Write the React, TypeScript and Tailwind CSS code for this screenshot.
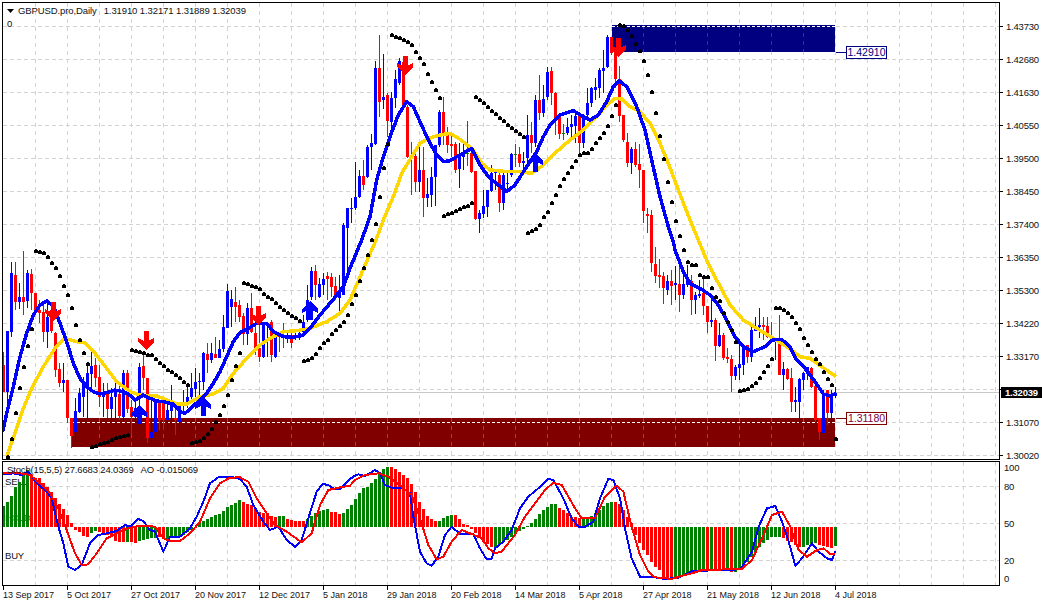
import React from 'react';

type Pt = [number, number];
// bar: colour (0 blue, 1 red, 2 green), high, low, body top, body bottom
type Bar = [number, number, number, number, number];

const BLUE = '#0000ff';
const RED = '#ff0000';
const GREEN = '#008000';
const GOLD = '#ffd700';

const barX = (k: number) => 3 + 4 * k;
const crop = (x0: number, y0: number, list: Pt[]): Pt[] => list.map(([X, Y]) => [x0 + X / 3, y0 + Y / 3]);
const poly = (list: Pt[]) => list.map(p => p.join(',')).join(' ');

const scale = (base: number, bars: Bar[]): Bar[] =>
  bars.map(([c, h, l, t, b]) => [c, base + h / 3, base + l / 3, base + t / 3, base + b / 3]);

const BARS: Bar[] = [
  ...scale(200, [
    [1,455,575,495,575],[0,392,620,392,575],[0,185,410,218,395],[1,185,330,225,305],[0,248,328,292,305],[1,152,345,292,305],
    [0,210,325,220,302],[1,208,330,222,280],[1,280,345,280,332],[1,300,370,330,340],[1,310,425,335,395],[0,300,445,352,395],
    [1,305,400,330,392],[1,395,530,398,510],[1,490,560,507,548],[0,490,575,540,548],[1,540,670,540,655],[1,655,745,655,708],
    [0,595,725,633,695],[0,565,640,578,635],[0,530,650,548,590],[0,490,655,520,565],[0,450,570,498,522],[1,475,560,495,535],
    [1,495,620,532,590],[0,550,650,578,590],[1,550,655,575,628],[0,565,660,590,628],[0,550,660,575,590],[1,545,660,582,648],
    [0,510,665,518,650],[1,510,640,520,628],[1,600,705,622,650],[0,595,670,625,650],[0,490,670,500,590],[1,462,570,497,535],
    [1,533,730,533,715],[0,590,730,695,715],[0,600,710,605,695],[1,600,690,605,660],[1,605,690,610,660],[0,600,690,630,660],
    [0,555,690,615,632],[1,625,705,655,660],[0,605,695,615,665],[0,570,640,610,615],[0,550,625,590,610],[0,520,610,565,590],
    [0,505,595,545,568],[0,520,600,543,547],[0,455,570,460,545],[1,430,520,462,480],[0,430,490,460,480],[1,410,475,462,475],
    [0,420,475,448,475],[0,345,455,380,448],[0,252,385,272,385],[0,270,380,298,320],[1,260,365,305,320],[1,300,365,315,352],
    [1,340,435,348,402],[0,310,435,325,402],[1,280,400,325,395],[1,370,465,398,450],[1,325,485,445,470],[0,365,475,370,470],
    [0,365,470,370,375],[1,360,485,365,465],[0,395,475,400,470],[1,395,455,405,410],[1,370,445,405,415],[0,395,430,405,412],
    [1,395,445,405,430],[0,395,420,405,410],[0,385,420,400,415],[0,345,400,365,395],[0,255,365,300,360],[0,200,300,212,292],
    [1,195,300,212,255],[0,235,295,252,290],[0,220,285,238,255],[1,215,300,228,236],[1,218,290,232,260],[1,230,300,258,290],
    [0,225,340,280,295],[0,70,260,75,285],[0,25,228,25,85],
  ]),
  ...scale(20, [
    [0,535,610,564,568],[0,425,570,530,565],[0,450,535,468,532],[1,420,510,468,495],[0,375,475,380,472],[0,342,450,370,382],
    [0,122,375,145,372],[1,45,292,145,245],[0,102,268,232,240],[1,220,350,225,302],[0,215,345,235,305],[0,150,265,178,235],
    [0,115,195,122,190],[1,110,262,125,258],[1,255,415,262,412],[1,365,525,408,412],[1,385,515,408,485],[0,365,515,450,485],
    [1,380,590,450,535],[0,475,562,522,535],[0,440,560,470,525],[0,375,558,375,472],[0,270,380,275,375],[1,232,375,275,345],
    [1,320,400,345,375],[1,345,410,372,378],[1,365,458,372,450],[0,370,505,408,448],[0,365,450,400,410],[2,303,437,399,402],
    [1,385,460,398,455],[1,452,600,452,597],[0,570,640,580,597],[0,510,595,558,582],[0,510,590,510,560],[0,435,515,460,512],
    [0,450,510,452,460],[1,455,575,465,548],[0,455,570,465,548],[0,450,510,488,492],[0,400,470,402,465],[2,372,440,401,404],
    [1,380,440,402,428],[0,395,445,422,428],[0,285,425,345,415],[1,305,400,345,370],[0,225,380,240,370],[1,165,300,240,278],
    [0,195,290,237,278],[0,140,240,155,232],[1,140,255,153,218],[1,215,345,218,300],[1,285,358,290,342],[2,312,360,339,342],
    [0,295,345,322,340],[0,285,350,312,322],[0,280,370,288,318],[1,278,402,285,368],[0,282,385,285,370],[0,205,295,250,285],
    [0,200,260,205,250],[0,175,240,200,210],[0,145,235,150,205],[0,90,220,145,152],[0,45,145,50,142],[1,50,105,50,100],
    [1,85,205,95,178],[1,138,305,178,288],[1,285,365,285,360],[1,338,440,365,428],[0,380,462,388,428],[1,365,440,388,435],
    [1,372,505,432,450],[1,450,608,450,572],[1,565,640,583,587],
  ]),
  ...scale(220, [
    [1,-30,155,-15,130],[1,80,188,132,167],[1,117,205,165,172],[1,155,252,168,205],[0,165,225,182,210],[1,150,255,182,198],
    [0,138,240,190,194],[1,125,275,192,225],[0,150,237,192,225],[0,135,200,180,195],
  ]),
  ...scale(240, [
    [1,105,225,123,180],[0,155,222,165,180],[0,120,175,163,167],[1,110,225,160,198],[1,198,280,198,245],[0,180,262,240,245],
    [1,235,362,240,318],[0,250,322,285,318],[1,280,360,285,355],[1,325,368,352,358],[1,345,455,358,408],[0,375,420,382,408],
    [0,310,420,372,385],[0,315,405,315,375],[1,315,370,315,352],[0,250,365,270,352],[0,230,272,258,272],[0,205,295,255,260],
    [1,230,300,255,260],[1,230,295,258,292],[1,245,310,292,305],[0,295,360,295,305],[1,225,405,295,405],[0,365,450,388,405],
    [1,385,420,388,418],[1,385,515,415,485],[0,440,515,481,485],[0,415,550,418,485],[0,395,450,400,420],[0,380,420,382,402],
    [1,380,445,385,440],[1,420,545,438,540],[1,535,600,535,575],[0,450,580,468,578],[1,450,555,450,518],[0,450,545,465,518],
    [0,440,475,458,468],
  ]),
];

const DOTS: Pt[] = [
  ...[[1,770],[2,717],[3,640],[4,565],[5,502],[6,438],[7,388],[8,153],[9,156],[10,160],[11,172],[12,190],[13,205],[14,228],[15,259],[16,285],[17,324],[18,376],[19,421],[20,458],[21,491],[22,741],[23,737],[24,733],[25,730],[26,725],[27,720],[28,713],[29,711],[30,708],[31,706],[32,450],[33,453],[34,456],[35,460],[36,465],[37,465],[38,478],[39,490],[40,497],[41,510],[42,517],[43,525],[44,533],[45,545],[46,556],[47,730],[48,727],[49,722],[50,715],[51,703],[52,687],[53,666],[54,645],[55,618],[56,585],[57,540],[58,498],[59,458],[60,248],[61,252],[62,257],[63,262],[64,268],[65,282],[66,291],[67,297],[68,310],[69,320],[70,330],[71,338],[72,347],[73,355],[74,362],[75,483],[76,480],[77,475],[78,463],[79,445],[80,430],[81,420],[82,403],[83,390],[84,378],[85,365],[86,345]].map(([k, Y]): Pt => [barX(k), 200 + Y / 3]),
  ...[[87,304],[88,295],[89,281],[90,268],[91,255],[92,240],[93,224],[94,197],[95,168],[96,144]].map(([k, y]): Pt => [barX(k), y]),
  ...[44,50,54,60,66,75,96,114,132,162,186,210,234].map((Y, i): Pt => [barX(97 + i), 20 + Y / 3]),
  ...[588,583,578,572,566,561,558,550].map((Y, i): Pt => [barX(110 + i), 20 + Y / 3]),
  ...[231,239,249,261,273,283,294,303,315,325,333,341,351].map((Y, i): Pt => [barX(118 + i), 20 + Y / 3]),
  ...[639,633,627,615,592,577,548,525,498,477,459,441,423,405,400,400,386,369,354,339,318,288,255].map((Y, i): Pt => [barX(131 + i), 20 + Y / 3]),
  ...[15,18,30,48,72,93,123,165,216,279,348,417,486,546,603].map((Y, i): Pt => [barX(154 + i), 20 + Y / 3]),
  ...[48,90,127].map((Y, i): Pt => [barX(169 + i), 220 + Y / 3]),
  ...[75,75,105,110,110,143,170,182,220,245,270,305,452,450,447,437,430,413,395,378,358,204,204,210,220,230,248,266,294,316,336,357,372,395,416,434,597].map((Y, i): Pt => [barX(172 + i), 240 + Y / 3]),
];

const MA_BLUE: Pt[] = [
  ...crop(0, 200, [[8,695],[20,640],[40,560],[60,470],[80,400],[100,345],[120,315],[140,303],[160,318],[180,370],[200,425],[220,490],[240,535],[260,560],[280,575],[300,582],[320,578],[345,570],[370,575],[385,582],[405,600],[430,585],[450,595],[470,603],[490,605],[520,612],[540,635],[555,640],[575,622],[600,600],[620,580],[640,550],[660,515],[680,470],[700,425],[720,398],[745,385],[770,370],[800,370],[820,395],[850,410],[880,412],[910,405],[930,385],[960,345],[1000,298],[1030,260],[1050,205]]),
  ...crop(340, 20, [[65,660],[90,590],[110,480],[130,410],[150,350],[175,285],[200,245],[220,260],[240,305],[265,360],[290,405],[310,425],[330,422],[360,405],[395,385],[420,435],[445,470],[475,495],[500,515],[525,495],[560,440],[590,395],[610,350],[630,315],[660,285],[700,272],[730,290],[750,300],[775,285],[800,245],[820,200],[838,183],[860,200],[890,260],[915,330],[935,420],[960,530],[985,620],[1000,665]]),
  ...crop(350, 220, [[975,90],[1000,155],[1015,180]]),
  ...crop(690, 240, [[0,130],[35,148],[60,165],[85,195],[110,240],[135,290],[160,320],[190,335],[225,320],[250,298],[275,298],[300,320],[320,360],[345,385],[375,425],[400,462],[420,468],[438,460]]),
];

const MA_GOLD: Pt[] = [
  ...crop(0, 200, [[20,770],[45,700],[70,625],[95,565],[130,500],[165,445],[195,415],[230,425],[255,428],[285,460],[320,505],[350,545],[390,575],[420,585],[470,588],[500,600],[530,612],[560,612],[600,590],[640,582],[670,565],[700,520],[740,475],[780,435],[810,415],[850,395],[890,392],[930,385],[980,365],[1020,340],[1050,300]]),
  ...crop(340, 20, [[108,660],[130,600],[160,530],[185,460],[215,410],[240,370],[265,355],[300,345],[330,340],[360,358],[395,385],[425,430],[450,450],[500,455],[540,455],[575,460],[610,435],[650,395],[690,360],[730,330],[770,290],[800,255],[825,235],[845,237],[870,260],[900,275],[930,310],[960,370],[985,430],[1015,510],[1050,600]]),
  ...crop(690, 240, [[25,0],[50,60],[80,120],[120,195],[160,240],[200,265],[250,295],[290,320],[330,350],[360,355],[395,380],[438,410]]),
];

const STOCH_BLUE: Pt[] = [
  ...crop(0, 455, [[10,58],[40,55],[65,60],[85,50],[110,85],[140,110],[155,130],[175,215],[190,265],[205,335],[225,345],[245,330],[270,265],[295,240],[320,235],[350,228],[375,210],[390,215],[415,192],[430,198],[450,225],[465,230],[490,290],[510,245],[540,245],[570,220],[590,185],[610,140],[630,85],[655,67],[690,65],[720,72],[740,95],[760,150],[790,200],[810,225],[835,215],[860,255],[885,275],[905,255],[925,190],[950,110],[968,87],[985,90],[1005,103],[1020,103],[1050,72]]),
  ...crop(345, 455, [[30,62],[40,58],[60,63],[90,45],[105,55],[120,90],[145,100],[175,100],[195,115],[205,185],[225,290],[245,325],[260,332],[280,305],[300,240],[320,215],[345,237],[385,237],[405,280],[425,313],[440,312],[450,280],[475,260],[500,225],[525,160],[550,125],[580,100],[610,72],[625,75],[655,130],[680,190],[700,215],[720,215],[745,200],[765,130],[790,72],[805,75],[825,130],[840,220],[860,310],[885,365],[920,365],[960,372],[1000,368]]),
  ...crop(692, 455, [[0,348],[100,345],[145,343],[180,290],[200,215],[225,160],[250,153],[270,200],[290,260],[310,332],[330,310],[360,265],[380,290],[405,310],[420,315],[430,288]]),
];

const STOCH_RED: Pt[] = [
  ...crop(0, 455, [[10,55],[40,52],[90,60],[120,85],[150,115],[175,160],[200,225],[225,295],[245,330],[265,328],[290,295],[320,250],[350,235],[385,220],[420,212],[465,215],[490,250],[510,258],[540,258],[570,235],[600,200],[630,130],[660,85],[690,68],[720,67],[745,80],[770,130],[800,175],[825,210],[860,230],[905,262],[935,235],[960,150],[985,105],[1020,97],[1050,92]]),
  ...crop(345, 455, [[30,75],[60,60],[100,55],[130,65],[170,95],[200,120],[225,190],[250,270],[275,313],[295,305],[320,260],[350,225],[375,235],[410,250],[430,280],[450,295],[470,290],[510,240],[540,185],[570,145],[600,105],[625,83],[650,90],[690,160],[710,190],[750,190],[780,125],[815,92],[835,110],[860,215],[885,300],[910,350],[930,367],[980,372],[1020,360]]),
  ...crop(692, 455, [[0,355],[30,345],[150,342],[180,315],[210,250],[240,180],[270,170],[295,215],[320,285],[345,305],[375,285],[395,280],[415,298],[430,298]]),
];

// AO histogram: colour, edge in crop px (crop y 215 is the zero line)
const AO: [number, number][] = [
  [2,153],[2,140],[2,122],[2,95],[2,80],[2,60],[2,45],[1,60],[1,68],[1,70],[1,85],[1,95],[1,110],[1,128],[1,148],[1,162],[1,180],[1,205],
  [1,225],[1,232],[1,243],[1,245],[2,233],[2,228],[1,230],[1,235],[1,240],[1,245],[1,258],[1,260],[1,262],[2,260],[1,262],[1,263],[2,258],[2,255],[2,252],[2,248],[2,248],[1,245],[1,250],[2,258],[2,250],[2,245],[2,242],[2,240],[2,232],[2,225],[1,218],
  [2,203],[2,197],[2,192],[2,187],[2,180],[2,178],[2,168],[2,157],[2,150],[2,145],[2,135],[1,140],[1,148],[1,150],[1,160],[1,172],[1,175],[1,175],[1,182],[1,185],[2,182],[2,183],[1,192],[1,196],[1,197],[1,197],[1,197],[2,192],[2,182],[2,175],[2,167],[2,165],[2,162],[1,170],[1,172],[1,178],[2,175],[2,162],
  [2,150],[2,132],[2,115],[2,100],[2,95],[2,85],[2,72],[2,55],[2,43],[2,37],[1,37],[1,42],[1,50],[1,60],[1,68],[1,87],[1,110],[1,140],[1,162],[1,182],[1,192],[1,197],[2,197],[2,188],[2,183],[2,180],[1,180],[1,192],[1,207],[1,210],
  [1,222],[1,235],[1,245],[1,262],[1,268],[1,275],[2,275],[2,268],[2,262],[2,255],[2,245],[2,238],[2,228],[2,222],[2,212],[2,205],[2,192],[2,178],[2,165],[2,155],[2,147],[2,147],[1,160],[1,165],[1,175],[1,185],[1,187],[1,190],[2,188],[2,187],[2,183],[2,175],[2,165],[2,152],[2,145],[2,140],[1,140],[1,147],[1,165],[1,187],[1,205],
  [1,240],[1,265],[1,285],[1,300],[1,320],[1,335],[1,345],[1,365],[1,370],[1,372],[2,368],[2,365],[2,360],[2,355],[2,350],[2,345],[2,345],[2,345],[1,345],[2,345],[1,345],[1,345],[1,345],[2,345],[1,350],[2,350],[2,340],[2,335],[2,320],[2,305],[2,290],[2,275],[2,265],[2,255],[2,245],[2,245],[2,245],[1,250],[1,258],[1,262],[1,270],[1,275],[2,275],[2,270],[2,268],[2,265],[1,270],[1,272],[1,275],[1,278],[2,272],
];

const GRID_X = Array.from({ length: 31 }, (_, i) => 35 + 32 * i);
const GRID_Y = Array.from({ length: 14 }, (_, i) => 26.5 + 33 * i);
// the 1.32120 row sits behind the black live price tag
const PRICES = ['1.43730','1.42680','1.41630','1.40550','1.39500','1.38450','1.37400','1.36350','1.35300','1.34220','1.33170','','1.31070','1.30020'];
const DATES = ['13 Sep 2017','5 Oct 2017','27 Oct 2017','20 Nov 2017','12 Dec 2017','5 Jan 2018','29 Jan 2018','20 Feb 2018','14 Mar 2018','5 Apr 2018','27 Apr 2018','21 May 2018','12 Jun 2018','4 Jul 2018'];

function Arrow({ x, y, up }: { x: number; y: number; up?: boolean }) {
  const d = up ? 1 : -1;
  const p: Pt[] = [[-2.5,19],[2.5,19],[2.5,9],[8,12],[8,8],[0,0],[-8,8],[-8,12],[-2.5,9]];
  return <polygon points={poly(p.map(([a, b]): Pt => [x + a, y + d * b]))} fill={up ? BLUE : RED} />;
}

function Line({ points, color, width }: { points: Pt[]; color: string; width: number }) {
  return <polyline points={poly(points)} fill="none" stroke={color} strokeWidth={width} strokeLinejoin="round" />;
}

function MainChart() {
  return (
    <svg width={996} height={456} viewBox="3 3 996 456" shapeRendering="crispEdges" className="block">
      {GRID_X.map(x => <line key={x} x1={x + 0.5} x2={x + 0.5} y1={3} y2={459} stroke="#d3d3d3" strokeDasharray="4 4" />)}
      {GRID_Y.map(y => <line key={y} x1={3} x2={999} y1={y} y2={y} stroke="#d3d3d3" strokeDasharray="4 3" />)}
      <line x1={3} x2={999} y1={392} y2={392} stroke="#c8c8c8" />

      <rect x={612} y={25} width={223} height={27} fill="#000080" />
      <rect x={72} y={418} width={763} height={29} fill="#800000" />
      {GRID_X.filter(x => x > 72 && x < 835).map(x => (
        <line key={x} x1={x + 0.5} x2={x + 0.5} y1={418} y2={447} stroke="#fff" strokeOpacity={0.25} strokeDasharray="4 4" />
      ))}
      {GRID_X.filter(x => x > 612 && x < 835).map(x => (
        <line key={x} x1={x + 0.5} x2={x + 0.5} y1={25} y2={52} stroke="#fff" strokeOpacity={0.2} strokeDasharray="4 4" />
      ))}
      <line x1={612} x2={835} y1={26.5} y2={26.5} stroke="#fff" strokeDasharray="3 2" />
      <line x1={72} x2={835} y1={422.5} y2={422.5} stroke="#fff" strokeDasharray="3 2" />
      <line x1={836} x2={847} y1={52.5} y2={52.5} stroke="#000080" />
      <line x1={836} x2={847} y1={418.5} y2={418.5} stroke="#800000" />

      {BARS.map(([c, h, l, t, b], k) => {
        const fill = c === 0 ? BLUE : c === 1 ? RED : GREEN;
        const x = barX(k);
        return (
          <g key={k} fill={fill}>
            <rect x={x} y={h} width={1} height={l - h} />
            <rect x={x - 1} y={t} width={3} height={Math.max(b - t, 1)} />
          </g>
        );
      })}

      <Line points={MA_GOLD} color={GOLD} width={3.5} />
      <Line points={MA_BLUE} color={BLUE} width={3.5} />

      <Arrow x={53} y={321} />
      <Arrow x={146} y={350} />
      <Arrow x={258} y={325} />
      <Arrow x={405} y={75} />
      <Arrow x={618} y={57} />
      <Arrow x={139} y={405} up />
      <Arrow x={203} y={397} up />
      <Arrow x={310} y={301} up />
      <Arrow x={535} y={153} up />

      {DOTS.map(([x, y], i) => (
        <g key={i} fill="#000">
          <rect x={x - 1.5} y={Math.round(y) - 1} width={4} height={3} />
          <rect x={x - 0.5} y={Math.round(y) - 2} width={2} height={1} />
        </g>
      ))}
    </svg>
  );
}

function IndicatorChart() {
  return (
    <svg width={996} height={123} viewBox="3 462 996 123" shapeRendering="crispEdges" className="block">
      {GRID_X.map(x => <line key={x} x1={x + 0.5} x2={x + 0.5} y1={462} y2={585} stroke="#d3d3d3" strokeDasharray="4 4" />)}
      {[486.5, 523.5, 560.5].map(y => <line key={y} x1={3} x2={999} y1={y} y2={y} stroke="#d3d3d3" strokeDasharray="4 3" />)}
      <text x={5} y={484.5} fontSize={9.5} fill="#111">SELL</text>
      <text x={5} y={521} fontSize={9.5} fill="#7a5a20">HOLD</text>
      <text x={5} y={558.5} fontSize={9.5} fill="#111">BUY</text>
      {AO.map(([c, Y], k) => {
        const edge = 455 + Y / 3;
        const y = Math.min(edge, 527);
        return <rect key={k} x={barX(k) - 1} y={y} width={3} height={Math.abs(527 - edge)} fill={c === 1 ? RED : GREEN} />;
      })}
      <Line points={STOCH_BLUE} color={BLUE} width={2} />
      <Line points={STOCH_RED} color={RED} width={2} />
    </svg>
  );
}

function ObjectLabel({ text, className }: { text: string; className: string }) {
  return (
    <div className={`absolute left-[843px] box-border flex h-[13px] w-[41px] items-center justify-center border bg-white text-[10.5px] tracking-normal ${className}`}>
      {text}
    </div>
  );
}

export default function App() {
  return (
    <div className="box-border flex h-[606px] w-[1042px] flex-col overflow-hidden bg-white pl-[2px] pt-[2px] font-['Liberation_Sans',sans-serif] text-[9.5px] leading-none tracking-[-0.2px] text-[#111]">
      <div className="flex h-[458px] shrink-0">
        <div className="relative box-border w-[998px] shrink-0 border border-black">
          <MainChart />
          <div className="absolute left-[4px] top-[3px] flex flex-col gap-[3px] tracking-[-0.1px]">
            <div className="flex items-center">
              <svg width={7} height={4} className="mr-[4px]"><polygon points="0,0 7,0 3.5,4" fill="#000" /></svg>
              <span>GBPUSD.pro,Daily</span>
              <span className="ml-[7px]">1.31910 1.32171 1.31889 1.32039</span>
            </div>
            <span>0</span>
          </div>
          <ObjectLabel text="1.42910" className="top-[43px] border-[#000080] text-[#000080]" />
          <ObjectLabel text="1.31180" className="top-[409px] border-[#800000] text-[#800040]" />
        </div>
        <div className="relative flex w-[42px] flex-col pt-[8px]">
          {PRICES.map((p, i) => (
            <div key={i} className="flex h-[33px] shrink-0 items-center">
              <div className="h-px w-[3px] bg-black" />
              <span className="ml-[3px]">{p}</span>
            </div>
          ))}
          <div className="absolute left-px top-[385px] flex h-[11px] w-[41px] items-center justify-center bg-black font-semibold text-white">1.32039</div>
        </div>
      </div>

      <div className="mt-px flex h-[125px] shrink-0">
        <div className="relative box-border w-[998px] shrink-0 border border-black">
          <IndicatorChart />
          <span className="absolute left-[4px] top-[3px] whitespace-pre tracking-[-0.15px]">Stoch(15,5,5) 27.6683 24.0369   AO -0.015069</span>
        </div>
        <div className="flex w-[42px] flex-col pl-[4px]">
          <div className="flex h-[13px] items-center">100</div>
          <div className="flex h-[25px] items-center">80</div>
          <div className="flex h-[49px] items-center">50</div>
          <div className="flex h-[25px] items-center">20</div>
          <div className="flex h-[11px] items-center">0</div>
        </div>
      </div>

      <div className="flex pl-px tracking-normal">
        {DATES.map(d => (
          <div key={d} className="flex w-[64px] shrink-0 flex-col items-start">
            <div className="h-[4px] w-px bg-black" />
            <span className="mt-px whitespace-nowrap text-[9px]">{d}</span>
          </div>
        ))}
      </div>
    </div>
  );
}
